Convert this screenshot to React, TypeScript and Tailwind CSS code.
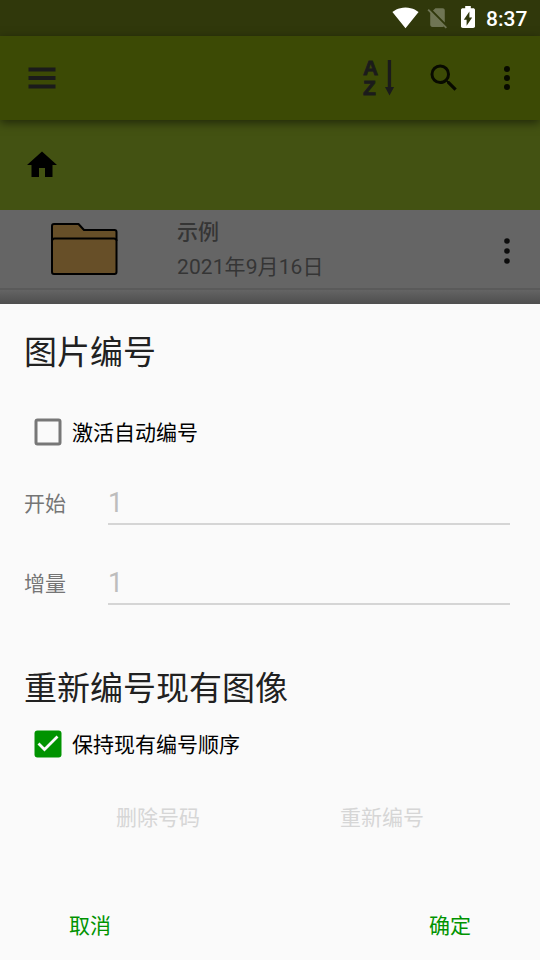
import React, { useState } from "react";

export default function App() {
  return (
    <div className="flex h-[960px] w-[540px] flex-col overflow-hidden bg-[#656565] font-['Roboto','Noto_Sans_CJK_SC',sans-serif]">
      <StatusBar />
      <Toolbar />
      <div className="flex h-[90px] shrink-0 items-center bg-[#435212] pl-6">
        <HomeIcon />
      </div>
      <FolderRow name="示例" date="2021年9月16日" />
      <div className="h-[14px] shrink-0 bg-linear-to-b from-[#646464] to-[#4e4e4e]" />
      <NumberingSheet />
    </div>
  );
}

/* ---------- Page behind the sheet ---------- */

function StatusBar() {
  return (
    <header className="flex h-9 shrink-0 items-start justify-end bg-[#30380b] pr-[12px] text-white">
      <svg className="mt-1 h-[27px] w-[27px]" viewBox="0 0 24 24" fill="currentColor">
        <path d="M12.01 21.49 23.64 7c-.45-.34-4.93-4-11.64-4C5.28 3 .81 6.66.36 7l11.63 14.49.01.01z" />
      </svg>
      <svg className="ml-[6px] mt-[5px] h-[25px] w-[25px] text-[#6f7554]" viewBox="0 0 24 24" fill="currentColor">
        <path d="M18.99 5c0-1.1-.89-2-1.99-2h-7L7.66 5.34 19 16.68zM3.65 3.88 2.38 5.15 5 7.77V19c0 1.1.9 2 2 2h10.01c.35 0 .67-.1.96-.26l1.88 1.88 1.27-1.27z" />
      </svg>
      <svg
        className="ml-[11px] mt-[6px] h-[22px] w-[14px]"
        viewBox="7 2 10 20"
        preserveAspectRatio="none"
        fill="currentColor"
      >
        <path d="M15.67 4H14V2h-4v2H8.33C7.6 4 7 4.6 7 5.33v15.33C7 21.4 7.6 22 8.33 22h7.33c.74 0 1.34-.6 1.34-1.33V5.33C17 4.6 16.4 4 15.67 4zM11 20v-5.5H9L13 7v5.5h2z" />
      </svg>
      <span className="ml-[11px] mt-[6px] w-[42px] text-[21px] font-medium leading-[26px]">8:37</span>
    </header>
  );
}

function Toolbar() {
  return (
    <nav className="relative flex h-[84px] shrink-0 items-center bg-[#3c4a05] pl-7 pr-[15px] shadow-[0_3px_9px_rgba(0,0,0,0.5)]">
      <button aria-label="Menu">
        <svg className="h-[22px] w-7" viewBox="0 0 28 22" fill="#1b1b1b">
          <rect x="0.5" y="0.5" width="27" height="4" />
          <rect x="0.5" y="9" width="27" height="4" />
          <rect x="0.5" y="17.5" width="27" height="4" />
        </svg>
      </button>
      <button aria-label="Sort" className="ml-auto flex h-10 text-[#1b1b1b]">
        <span className="flex w-[22px] flex-col items-start font-['Liberation_Sans',sans-serif] text-[21px] font-bold leading-[20px] [-webkit-text-stroke:0.8px_#1b1b1b]">
          <span>A</span>
          <span>Z</span>
        </span>
        <svg className="mt-[2px] h-9 w-[10px]" viewBox="0 0 10 36" fill="currentColor">
          <path d="M2.800 0h3.300v27h3L4.500 35.500 0 27h2.800z" />
        </svg>
      </button>
      <button aria-label="Search" className="ml-[31px]">
        <svg className="h-9 w-9" viewBox="0 0 24 24" fill="#080a00">
          <path d="M15.5 14h-.79l-.28-.27A6.471 6.471 0 0 0 16 9.5 6.5 6.5 0 1 0 9.5 16c1.61 0 3.09-.59 4.23-1.57l.27.28v.79l5 4.99L20.49 19zm-6 0C7.01 14 5 11.99 5 9.5S7.01 5 9.5 5 14 7.01 14 9.5 11.99 14 9.5 14z" />
        </svg>
      </button>
      <button aria-label="More" className="ml-[27px]">
        <svg className="h-9 w-9" viewBox="0 0 36 36" fill="#080a00">
          <circle cx="18" cy="9" r="3" />
          <circle cx="18" cy="18" r="3" />
          <circle cx="18" cy="27" r="3" />
        </svg>
      </button>
    </nav>
  );
}

function HomeIcon() {
  return (
    <svg className="h-9 w-9" viewBox="0 0 24 24" fill="black">
      <path d="M10 20v-6h4v6h5v-8h3L12 3 2 12h3v8z" />
    </svg>
  );
}

function FolderRow({ name, date }: { name: string; date: string }) {
  return (
    <div className="flex h-20 shrink-0 items-start border-b-2 border-[#5a5a5a] pl-[50px] pr-[15px] text-[21px] text-[#353535]">
      <svg className="mt-3 h-[54px] w-[68px]" viewBox="0 0 68 54" fill="#674f28" stroke="black" strokeWidth="2" strokeLinejoin="round">
        <path d="M2 50V4q0-2 2-2H28.500L34 8H64.500q2 0 2 2V50q0 2-2 2H4Q2 52 2 50z" />
        <path d="M2 19q0-2.500 2.500-2.500H64q2.500 0 2.500 2.500" />
      </svg>
      <div className="ml-[59px] mt-[5px]">
        <div className="h-[35px] font-medium leading-[35px]">{name}</div>
        <div className="h-[35px] leading-[35px] tracking-[0.1px]">{date}</div>
      </div>
      <svg className="ml-auto mt-[23px] h-9 w-9" viewBox="0 0 36 36" fill="#0c0c0c">
        <circle cx="18" cy="8" r="2.800" />
        <circle cx="18" cy="18" r="2.800" />
        <circle cx="18" cy="28" r="2.800" />
      </svg>
    </div>
  );
}

/* ---------- Bottom sheet ---------- */

function NumberingSheet() {
  const [auto, setAuto] = useState(false);
  const [keepOrder, setKeepOrder] = useState(true);

  return (
    <section className="h-[656px] shrink-0 bg-[#fafafa] text-[21px]" role="dialog">
      <h2 className="px-6 pt-[25px] text-[33px] leading-[48px] text-[#212121]">图片编号</h2>
      <div className="mt-[37px]">
        <Checkbox label="激活自动编号" checked={auto} onToggle={() => setAuto(!auto)} />
      </div>
      <div className="mt-[29px]">
        <NumberField label="开始" value="1" />
      </div>
      <div className="mt-[34px]">
        <NumberField label="增量" value="1" />
      </div>
      <h2 className="mt-[60px] px-6 text-[33px] leading-[48px] text-[#212121]">重新编号现有图像</h2>
      <div className="mt-[13px]">
        <Checkbox label="保持现有编号顺序" checked={keepOrder} onToggle={() => setKeepOrder(!keepOrder)} />
      </div>
      <div className="mt-[38px] flex pl-[46px] leading-9 text-[#d6d6d6]">
        <button className="w-[224px]" disabled>删除号码</button>
        <button className="w-[224px]" disabled>重新编号</button>
      </div>
      <div className="mt-[72px] flex justify-between leading-9 text-[#009300]">
        <button className="w-[180px]">取消</button>
        <button className="w-[180px]">确定</button>
      </div>
    </section>
  );
}

function Checkbox({ label, checked, onToggle }: { label: string; checked: boolean; onToggle: () => void }) {
  return (
    <button
      role="checkbox"
      aria-checked={checked}
      onClick={onToggle}
      className="flex h-9 items-center gap-[10px] pl-[34px] text-black"
    >
      <svg className="h-7 w-7" viewBox="0 0 28 28" fill="none">
        {checked ? (
          <>
            <rect x="0.5" y="0.5" width="27" height="27" rx="3" fill="#009300" />
            <path d="M4.500 13.500l6 6L23.500 6.500" stroke="#fafafa" strokeWidth="2.800" />
          </>
        ) : (
          <rect x="2" y="2" width="24" height="24" rx="1.500" stroke="#777" strokeWidth="3" />
        )}
      </svg>
      <span className="pt-[2px] leading-9">{label}</span>
    </button>
  );
}

function NumberField({ label, value }: { label: string; value: string }) {
  return (
    <div className="flex h-[46px] pl-6 pr-[30px]">
      <span className="w-[84px] pt-[7px] leading-9 text-[#757575]">{label}</span>
      <div className="h-[46px] flex-1 border-b-2 border-[#d5d5d5] pt-[6px] text-[27px] leading-9 text-[#bdbdbd]">{value}</div>
    </div>
  );
}
